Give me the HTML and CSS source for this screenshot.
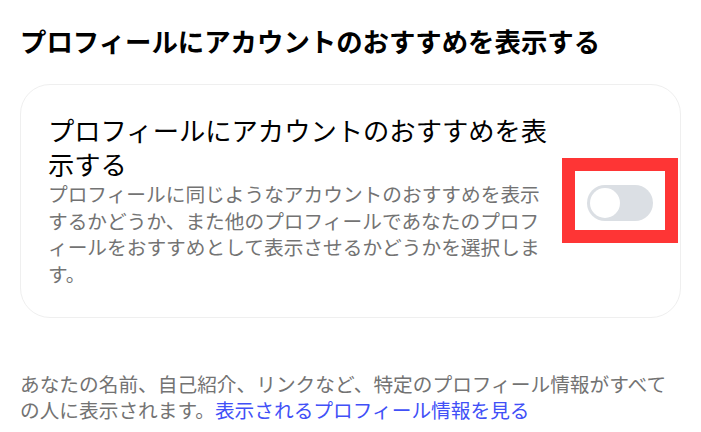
FILE: index.html
```html
<!DOCTYPE html>
<html lang="ja">
<head>
  <meta charset="UTF-8" />
  <meta name="viewport" content="width=device-width, initial-scale=1.0" />
  <title>プロフィールにアカウントのおすすめを表示する</title>
  <link rel="stylesheet" href="styles.css">
</head>
<body>
  <div class="page">
    <h2 class="page-title">プロフィールにアカウントのおすすめを表示する</h2>

    <div class="setting-card">
      <div class="setting-text">
        <div class="setting-label">プロフィールにアカウントのおすすめを表示する</div>
        <div class="setting-desc">プロフィールに同じようなアカウントのおすすめを表示するかどうか、また他のプロフィールであなたのプロフィールをおすすめとして表示させるかどうかを選択します。</div>
      </div>
      <div class="highlight">
        <label class="toggle">
          <input type="checkbox" />
          <span class="knob"></span>
        </label>
      </div>
    </div>

    <p class="note">
      あなたの名前、自己紹介、リンクなど、特定のプロフィール情報がすべての人に表示されます。<a href="#">表示されるプロフィール情報を見る</a>
    </p>
  </div>
</body>
</html>
```

FILE: styles.css
```css
body {
  margin: 0;
  font-family: "Noto Sans CJK JP", "Noto Sans", sans-serif;
  background: #fff;
  color: #000;
}

.page {
  padding: 23px 20px 0;
  line-break: loose;
}

.page-title {
  margin: 0 0 25px;
  font-size: 26.4px;
  line-height: 36px;
  font-weight: 700;
}

.setting-card {
  display: flex;
  align-items: center;
  gap: 6px;
  border: 1px solid #efefef;
  border-radius: 30px;
  padding: 28px 1px 30px 27px;
}

.setting-text {
  width: 508px;
}

.setting-label {
  font-size: 26.3px;
  line-height: 34px;
}

.setting-desc {
  font-size: 19.7px;
  line-height: 26.5px;
  color: #737373;
}

.highlight {
  border: 13px solid #fe3535;
  padding: 14px 12px 9px;
}

.toggle {
  display: block;
  width: 66px;
  height: 36px;
  padding: 3px;
  box-sizing: border-box;
  border-radius: 18px;
  background-color: #dbdfe4;
  cursor: pointer;
}

.toggle input {
  display: none;
}

.knob {
  display: block;
  width: 30px;
  height: 30px;
  border-radius: 50%;
  background-color: #fff;
}

.note {
  margin: 53px 0 0;
  font-size: 19.7px;
  line-height: 26px;
  color: #737373;
}

.note a {
  color: #4150f7;
  text-decoration: none;
}
```
